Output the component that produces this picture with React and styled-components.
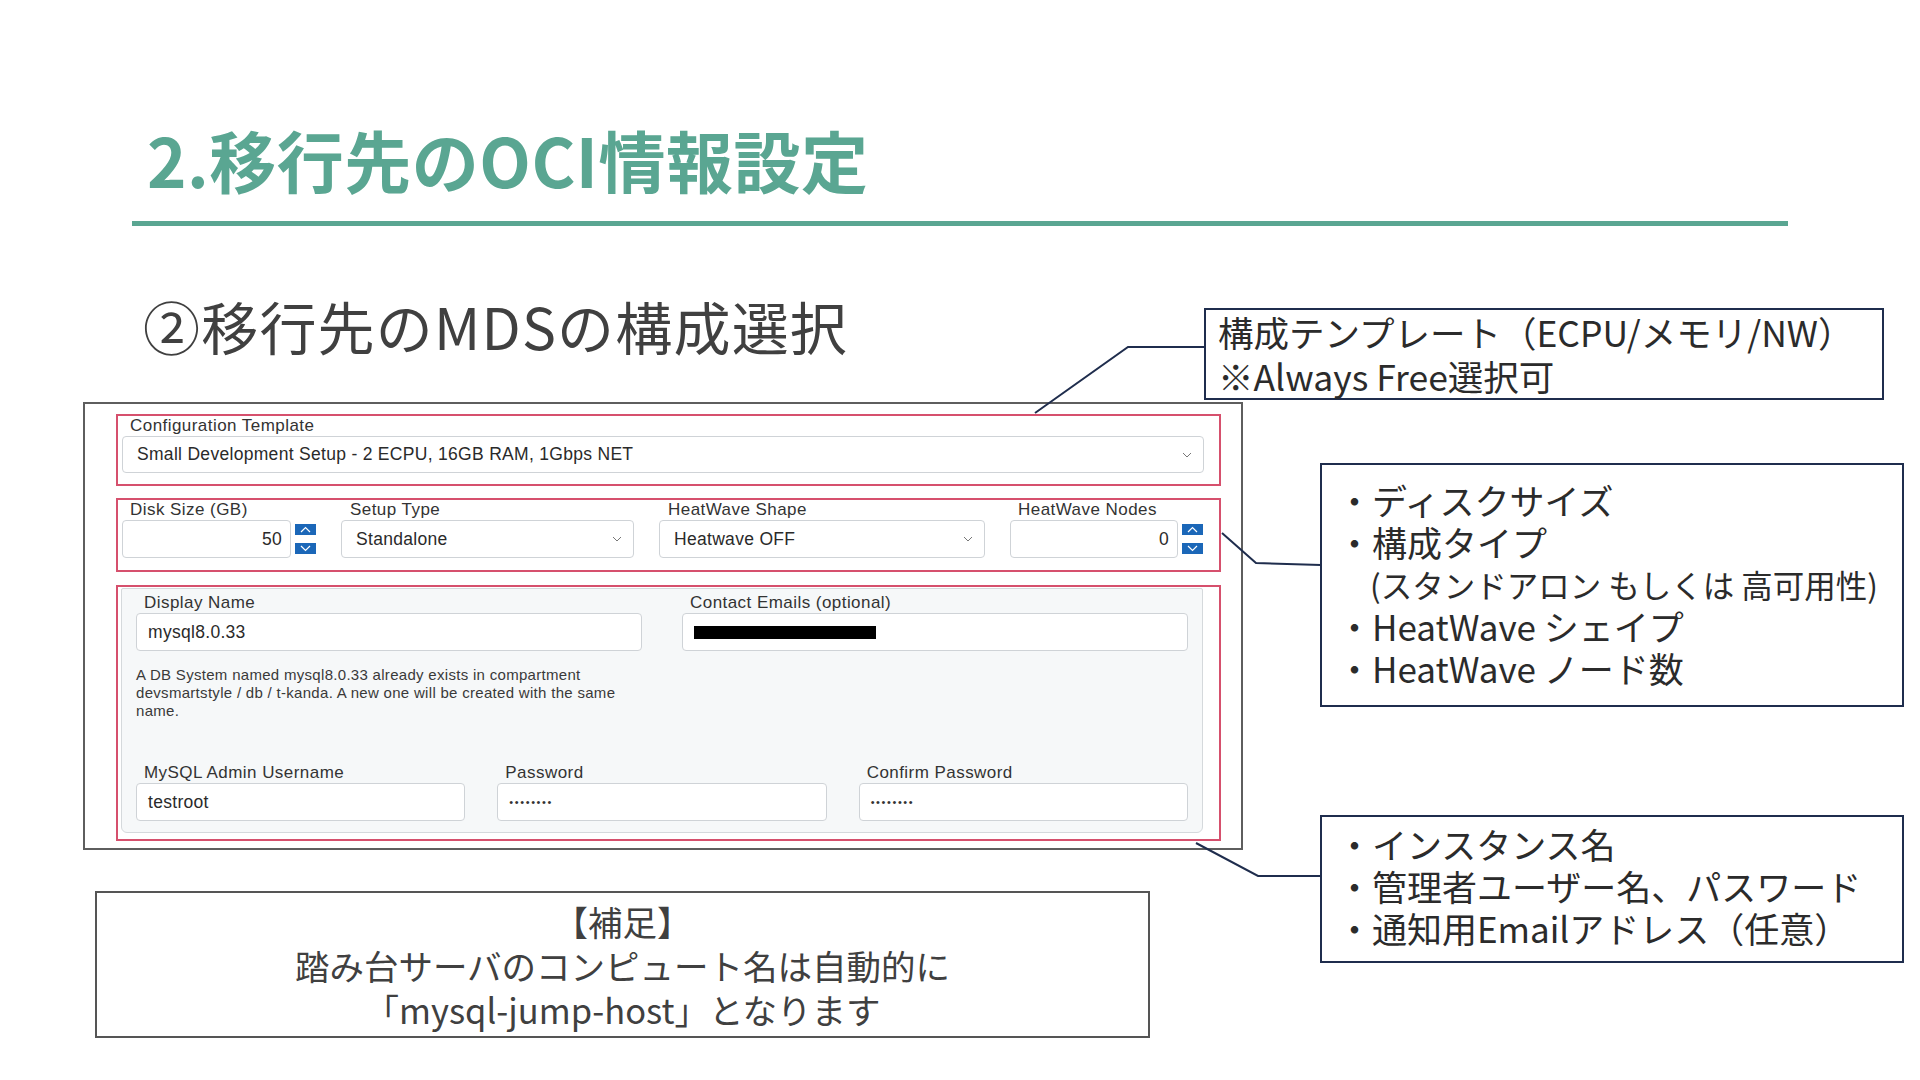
import React from 'react';
import styled, { createGlobalStyle } from 'styled-components';

const GlobalStyle = createGlobalStyle`
  html, body { margin: 0; padding: 0; background: #ffffff; }
  body { font-family: "Noto Sans CJK JP", "Noto Sans", sans-serif; }
`;

const GREEN = '#5aa692';
const RED = '#d6506d';
const NAVY = '#1f2d4d';
const UI_FONT = '"Liberation Sans", Arial, sans-serif';

const Slide = styled.div`
  position: relative;
  width: 1920px;
  height: 1080px;
  overflow: hidden;
  background: #ffffff;
  display: flex;
  flex-direction: column;
  font-family: "Noto Sans CJK JP", "Noto Sans", sans-serif;
`;

const Title = styled.h1`
  margin: 123px 0 0 147px;
  font-size: 67px;
  line-height: 72px;
  font-weight: 700;
  color: ${GREEN};
  letter-spacing: 0.5px;
`;

const Rule = styled.div`
  margin: 26px 0 0 132px;
  width: 1656px;
  height: 5px;
  background: ${GREEN};
`;

const TopRow = styled.div`
  display: flex;
  align-items: flex-start;
  margin-top: 58px;
`;

const Subtitle = styled.h2`
  margin: 0 0 0 143px;
  font-size: 57px;
  font-weight: 400;
  line-height: normal;
  color: #404040;
  letter-spacing: 1.2px;
`;

const Callout = styled.div`
  box-sizing: border-box;
  border: 2px solid ${NAVY};
  background: #ffffff;
  width: ${p => p.$w}px;
  height: ${p => p.$h}px;
  margin-top: ${p => p.$mt}px;
  padding: ${p => p.$pad};
  font-size: ${p => p.$fs || 35}px;
  line-height: ${p => p.$lh}px;
  color: #2b2b2b;
  white-space: nowrap;
`;

const TopCallout = styled(Callout)`
  margin-left: auto;
  margin-right: 36px;
`;

const Line = styled.div`
  padding-left: ${p => (p.$indent ? '33px' : '0')};
  font-size: ${p => (p.$small ? '31.5px' : 'inherit')};
`;

const MainRow = styled.div`
  display: flex;
  align-items: flex-start;
  margin-top: 2px;
`;

const LeftCol = styled.div`
  margin-left: 83px;
  width: 1160px;
  display: flex;
  flex-direction: column;
`;

const RightCol = styled.div`
  margin-left: 77px;
  width: 584px;
  display: flex;
  flex-direction: column;
`;

const Frame = styled.div`
  box-sizing: border-box;
  height: 448px;
  border: 2px solid #5e5e5e;
  padding: 10px 20px 0 31px;
  display: flex;
  flex-direction: column;
  font-family: ${UI_FONT};
  color: #333333;
`;

const RedBox = styled.div`
  box-sizing: border-box;
  border: 2px solid ${RED};
  margin-top: ${p => p.$mt || 0}px;
  padding: ${p => p.$pad};
`;

const Label = styled.div`
  font-size: 17px;
  letter-spacing: 0.45px;
  line-height: ${p => p.$lh || 20}px;
  height: ${p => p.$lh || 20}px;
  padding-left: ${p => p.$pl || 8}px;
  color: #333333;
  white-space: nowrap;
`;

const Control = styled.div`
  box-sizing: border-box;
  flex: ${p => (p.$grow ? '1 1 0' : 'none')};
  min-width: 0;
  height: ${p => p.$h || 38}px;
  border: 1px solid #cfd3d7;
  border-radius: 4px;
  background: #ffffff;
  display: flex;
  align-items: center;
  justify-content: ${p => (p.$right ? 'flex-end' : 'space-between')};
  padding: 0 ${p => p.$pr || 12}px 0 ${p => p.$pl || 11}px;
  font-size: 17.5px;
  letter-spacing: 0.3px;
  color: #2a2a2a;
  white-space: nowrap;
`;

const Row4 = styled.div`
  display: grid;
  grid-template-columns: 194px 293px 326px 193px;
  column-gap: 25px;
`;

const Field = styled.div`
  display: flex;
  flex-direction: column;
  min-width: 0;
`;

const NumberWrap = styled.div`
  display: flex;
  align-items: flex-start;
  gap: 4px;
`;

const Spinner = styled.div`
  display: flex;
  flex-direction: column;
  gap: 8px;
  padding-top: 4px;
`;

const SpinBtn = styled.div`
  width: 21px;
  height: 11px;
  background: #1b67b8;
  display: flex;
  align-items: center;
  justify-content: center;
`;

const Panel = styled.div`
  box-sizing: border-box;
  border: 1px solid #d5d9dc;
  border-radius: 2px 2px 6px 6px;
  background: #f6f8f9;
  padding: 3px 14px 11px 14px;
  display: flex;
  flex-direction: column;
`;

const TwoCols = styled.div`
  display: grid;
  grid-template-columns: 506px 506px;
  column-gap: 40px;
`;

const ThreeCols = styled.div`
  display: grid;
  grid-template-columns: repeat(3, 1fr);
  column-gap: 32px;
  margin-top: 43px;
`;

const Help = styled.div`
  margin-top: 15px;
  font-size: 15px;
  line-height: 18px;
  color: #3a3a3a;
  letter-spacing: 0.3px;
`;

const Redacted = styled.span`
  display: block;
  width: 182px;
  height: 13px;
  background: #000000;
`;

const Dots = styled.span`
  font-size: 11px;
  letter-spacing: 1.6px;
  color: #333333;
`;

const Note = styled.div`
  box-sizing: border-box;
  margin: 41px 0 0 12px;
  width: 1055px;
  height: 147px;
  border: 2px solid #555555;
  padding-top: 6px;
  text-align: center;
  font-size: 34.5px;
  line-height: 44px;
  color: #404040;
`;

const Overlay = styled.svg`
  position: absolute;
  left: 0;
  top: 0;
  pointer-events: none;
`;

const Chevron = () => (
  <svg width="10" height="6" viewBox="0 0 10 6">
    <polyline points="1,1 5,5 9,1" fill="none" stroke="#777" strokeWidth="1" />
  </svg>
);

const SpinIcon = ({ up }) => (
  <svg width="11" height="7" viewBox="0 0 11 7">
    <polyline
      points={up ? '1,6 5.5,1.5 10,6' : '1,1 5.5,5.5 10,1'}
      fill="none"
      stroke="#ffffff"
      strokeWidth="1.2"
    />
  </svg>
);

const NumberField = ({ label, value }) => (
  <Field>
    <Label>{label}</Label>
    <NumberWrap>
      <Control $grow $right $pr={8}>{value}</Control>
      <Spinner>
        <SpinBtn><SpinIcon up /></SpinBtn>
        <SpinBtn><SpinIcon /></SpinBtn>
      </Spinner>
    </NumberWrap>
  </Field>
);

const SelectField = ({ label, value }) => (
  <Field>
    <Label $pl={9}>{label}</Label>
    <Control $pl={14} $pr={11}>
      <span>{value}</span>
      <Chevron />
    </Control>
  </Field>
);

const TextField = ({ label, children, lh }) => (
  <Field>
    <Label $lh={lh}>{label}</Label>
    <Control>{children}</Control>
  </Field>
);

export default function App() {
  return (
    <>
      <GlobalStyle />
      <Slide>
        <Title>2.移行先のOCI情報設定</Title>
        <Rule />
        <TopRow>
          <Subtitle>②移行先のMDSの構成選択</Subtitle>
          <TopCallout $w={680} $h={92} $mt={24} $lh={44} $fs={35.5} $pad="0 12px">
            <Line>構成テンプレート（ECPU/メモリ/NW）</Line>
            <Line>※Always Free選択可</Line>
          </TopCallout>
        </TopRow>
        <MainRow>
          <LeftCol>
            <Frame>
              <RedBox $pad="0 15px 11px 4px">
                <Label>Configuration Template</Label>
                <Control $h={37} $pl={14} $pr={11}>
                  <span>Small Development Setup - 2 ECPU, 16GB RAM, 1Gbps NET</span>
                  <Chevron />
                </Control>
              </RedBox>
              <RedBox $mt={12} $pad="0 16px 12px 4px">
                <Row4>
                  <NumberField label="Disk Size (GB)" value="50" />
                  <SelectField label="Setup Type" value="Standalone" />
                  <SelectField label="HeatWave Shape" value="Heatwave OFF" />
                  <NumberField label="HeatWave Nodes" value="0" />
                </Row4>
              </RedBox>
              <RedBox $mt={13} $pad="1px 16px 6px 3px">
                <Panel>
                  <TwoCols>
                    <TextField label="Display Name" lh={21}>mysql8.0.33</TextField>
                    <TextField label="Contact Emails (optional)" lh={21}>
                      <Redacted />
                    </TextField>
                    <Help>
                      A DB System named mysql8.0.33 already exists in compartment
                      devsmartstyle / db / t-kanda. A new one will be created with the same name.
                    </Help>
                  </TwoCols>
                  <ThreeCols>
                    <TextField label="MySQL Admin Username">testroot</TextField>
                    <TextField label="Password"><Dots>••••••••</Dots></TextField>
                    <TextField label="Confirm Password"><Dots>••••••••</Dots></TextField>
                  </ThreeCols>
                </Panel>
              </RedBox>
            </Frame>
            <Note>
              <div>【補足】</div>
              <div>踏み台サーバのコンピュート名は自動的に</div>
              <div>「mysql-jump-host」となります</div>
            </Note>
          </LeftCol>
          <RightCol>
            <Callout $w={584} $h={244} $mt={61} $lh={42} $pad="14px 0 0 15px">
              <Line>・ディスクサイズ</Line>
              <Line>・構成タイプ</Line>
              <Line $indent $small>(スタンドアロン もしくは 高可用性)</Line>
              <Line>・HeatWave シェイプ</Line>
              <Line>・HeatWave ノード数</Line>
            </Callout>
            <Callout $w={584} $h={148} $mt={108} $lh={42} $pad="6px 0 0 15px">
              <Line>・インスタンス名</Line>
              <Line>・管理者ユーザー名、パスワード</Line>
              <Line>・通知用Emailアドレス（任意）</Line>
            </Callout>
          </RightCol>
        </MainRow>
        <Overlay width="1920" height="1080" viewBox="0 0 1920 1080">
          <g fill="none" stroke={NAVY} strokeWidth="2">
            <polyline points="1205,347 1128,347 1035,413" />
            <polyline points="1321,565 1256,563 1222,533" />
            <polyline points="1321,876 1258,876 1196,843" />
          </g>
        </Overlay>
      </Slide>
    </>
  );
}
